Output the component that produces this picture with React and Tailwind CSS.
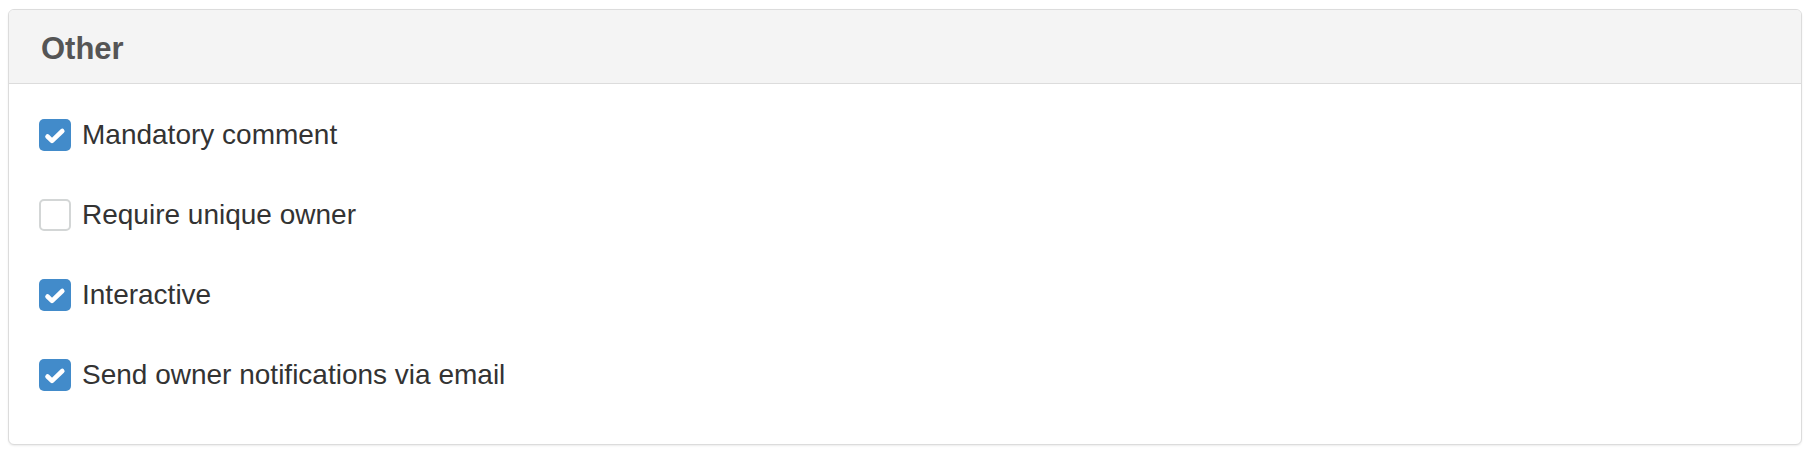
const OPTIONS = [
  { id: "mandatory", label: "Mandatory comment", checked: true },
  { id: "unique", label: "Require unique owner", checked: false },
  { id: "interactive", label: "Interactive", checked: true },
  { id: "email", label: "Send owner notifications via email", checked: true },
];

function Box({ checked }) {
  if (!checked) {
    return <span className="w-[32px] h-[32px] shrink-0 rounded-[5px] border-2 border-[#d3d6d6] bg-white" />;
  }
  return (
    <span className="w-[32px] h-[32px] shrink-0 rounded-[5px] bg-[#428bca] flex">
      <svg width="32" height="32" viewBox="0 0 32 32" fill="none">
        <path d="M8.5 17.5l4.5 4.3L23.3 12" stroke="#fff" strokeWidth="4.6" strokeLinecap="round" strokeLinejoin="round" />
      </svg>
    </span>
  );
}

export default function App() {
  return (
    <div className="bg-white min-h-[470px] pt-[9px] pl-2 pr-4" style={{ fontFamily: '"Liberation Sans", Arial, sans-serif' }}>
      <div className="border border-[#dcdcdc] rounded-[6px] overflow-hidden bg-white shadow-[0_1px_2px_rgba(0,0,0,0.08)]">
        <div className="h-[74px] bg-[#f4f4f4] border-b border-[#dcdcdc] flex items-center px-[32px] pt-[4px]">
          <h3 className="text-[31px] font-bold text-[#555] leading-none">Other</h3>
        </div>
        <div className="pt-[35px] pb-[53px] pl-[30px] flex flex-col gap-[48px]">
          {OPTIONS.map((o) => (
            <label key={o.id} className="flex items-center gap-[11px] h-[32px]">
              <Box checked={o.checked} />
              <span className="text-[28px] text-[#333] leading-none">{o.label}</span>
            </label>
          ))}
        </div>
      </div>
    </div>
  );
}
